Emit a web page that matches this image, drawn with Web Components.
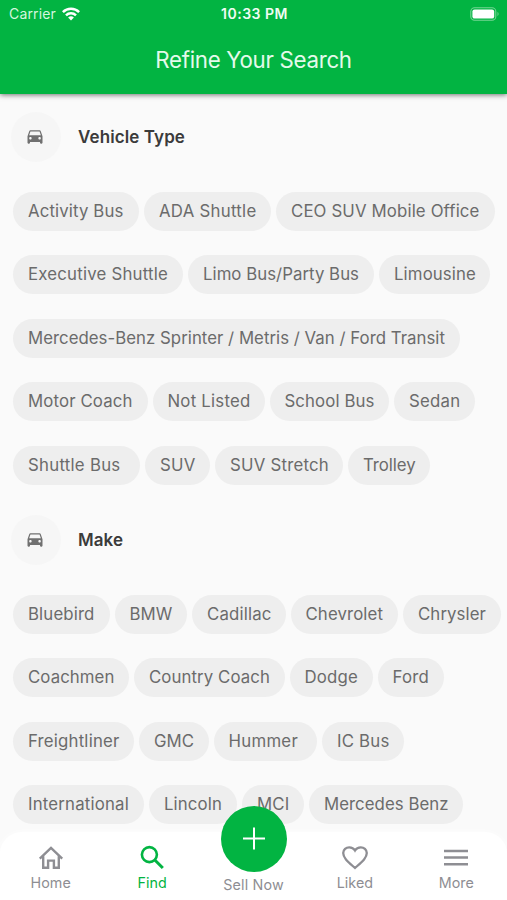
<!DOCTYPE html>
<html lang="en">
<head>
<meta charset="utf-8">
<title>Refine Your Search</title>
<style>
html, body { margin: 0; height: 100%; }
body { background: #fafafa; font-family: Inter, "Liberation Sans", sans-serif; overflow: hidden; }
</style>
</head>
<body>
<search-screen></search-screen>
<script>
const define = (name, html, ready) => customElements.define(name, class extends HTMLElement {
  constructor() {
    super();
    this.attachShadow({ mode: "open" }).innerHTML = html;
  }
  connectedCallback() { if (ready) ready(this, this.shadowRoot); }
});

/* Text tracked so that its line is exactly as wide as its "w" attribute. */
define("fit-text", `<style>
:host { display: block; white-space: nowrap; width: max-content; }
span { display: inline-block; }
</style><span><slot></slot></span>`, (el, root) => {
  const w = +el.getAttribute("w");
  const span = root.querySelector("span");
  span.style.letterSpacing = "0";
  const gap = (w - span.getBoundingClientRect().width) / el.textContent.length;
  span.style.letterSpacing = gap.toFixed(3) + "px";
});

define("status-bar", `<style>
:host { display: grid; grid-template-columns: 1fr auto 1fr; align-items: center; height: 27px; padding: 0 7px 0 9px; color: #fff; font-size: 14px; line-height: 27px; }
.left { display: flex; align-items: center; gap: 6px; color: #d5f6df; }
.time { font-weight: 600; font-size: 14px; color: #effcf3; }
.right { display: flex; justify-content: flex-end; }
svg { display: block; }
</style>
<div class="left"><fit-text w="47">Carrier</fit-text>
<svg width="18" height="14" viewBox="0 0 18 14" fill="none" stroke="#fff" stroke-width="2.5"><path d="M.9 5.1a11.5 11.5 0 0 1 16.2 0M4 8.4a7.1 7.1 0 0 1 10 0"/><path d="M9 13.5 6.1 10.6a4.1 4.1 0 0 1 5.8 0Z" fill="#fff" stroke="none"/></svg></div>
<fit-text class="time" w="67">10:33 PM</fit-text>
<div class="right"><svg width="30" height="14" viewBox="0 0 30 14"><rect x=".8" y=".8" width="25" height="12.4" rx="3.8" fill="none" stroke="#75d594" stroke-width="1.1"/><rect x="2.4" y="2.4" width="21.8" height="9.2" rx="2.2" fill="#fff"/><path d="M27.5 4.8q2.2 2.2 0 4.4Z" fill="#75d594"/></svg></div>`);

define("app-header", `<style>
:host { display: block; position: relative; z-index: 1; height: 94px; background: #02b442; box-shadow: 0 1px 5px rgba(0,0,0,.55); }
.title { display: flex; justify-content: center; height: 65px; align-items: center; font-size: 22.3px; color: #e4faeb; }
</style><status-bar></status-bar><div class="title"><fit-text w="196.5">Refine Your Search</fit-text></div>`);

define("section-title", `<style>
:host { display: flex; align-items: center; gap: 17.5px; height: 50px; padding-left: 10.5px; font-size: 17px; line-height: 20px; font-weight: 600; color: #3b3b3b; }
.disc { width: 50px; height: 50px; border-radius: 50%; background: #f6f6f6; display: grid; place-items: center; }
svg { display: block; margin-right: 1px; }
</style><div class="disc"><svg width="20" height="20" viewBox="0 0 24 24" fill="#707070"><path d="M18.92 5.01C18.72 4.42 18.16 4 17.5 4h-11c-.66 0-1.21.42-1.42 1.01L3 11v8c0 .55.45 1 1 1h1c.55 0 1-.45 1-1v-1h12v1c0 .55.45 1 1 1h1c.55 0 1-.45 1-1v-8l-2.08-5.99zM6.5 15c-.83 0-1.5-.67-1.5-1.5S5.67 12 6.5 12s1.5.67 1.5 1.5S7.33 15 6.5 15zm11 0c-.83 0-1.5-.67-1.5-1.5s.67-1.5 1.5-1.5 1.5.67 1.5 1.5-.67 1.5-1.5 1.5zM5 10l1.5-4.5h11L19 10H5z"/></svg></div><slot></slot>`);

define("chip-row", `<style>
:host { display: flex; gap: 5px; height: 39px; padding-left: 13px; }
</style><slot></slot>`);

define("filter-chip", `<style>
:host { display: block; box-sizing: border-box; flex: none; height: 39px; padding-left: 15px; border-radius: 19.5px; background: #eee; color: #6b6b6b; font-size: 16.8px; line-height: 39px; }
</style><slot></slot>`, el => { el.style.width = el.getAttribute("w") + "px"; });

define("nav-item", `<style>
:host { display: flex; flex: 1; flex-direction: column; align-items: center; color: #8e8e93; font-size: 14.3px; line-height: 18px; }
:host([active]) { color: #02b442; }
.icon { height: 28px; display: flex; align-items: center; margin-bottom: 2px; }
</style><div class="icon"><slot name="icon"></slot></div><slot></slot>`);

define("tab-bar", `<style>
:host { display: flex; position: absolute; left: 0; right: 0; bottom: 0; height: 56px; padding-top: 12px; background: #fff; border-radius: 22px 22px 0 0; z-index: 2; box-shadow: 0 0 6px rgba(255,255,255,.8); }
svg { display: block; }
.fab { position: absolute; left: 221px; top: -26px; width: 66px; height: 66px; border-radius: 50%; background: #02b442; display: grid; place-items: center; }
.sell { padding-top: 2px; }
</style>
<nav-item><svg slot="icon" width="28" height="28" viewBox="0 0 28 28" fill="none" stroke="currentColor" stroke-width="2.4"><path d="M2.800 14.600 14 3.800 25.200 14.600M6.200 12.200v11.600h4.900v-7.200h5.800v7.200H21.800V12.200"/></svg><fit-text w="40.5">Home</fit-text></nav-item>
<nav-item active><svg slot="icon" width="28" height="28" viewBox="0 0 28 28" fill="none" stroke="currentColor" stroke-width="2.6"><circle cx="11.4" cy="10.6" r="7.5"/><path d="m16.800 16 8 8" stroke-width="3"/></svg><fit-text w="29">Find</fit-text></nav-item>
<nav-item class="sell"><fit-text w="60.5">Sell Now</fit-text></nav-item>
<nav-item><svg slot="icon" width="28" height="28" viewBox="0 0 28 28" fill="none" stroke="currentColor" stroke-width="2.3"><path d="M14 24C7.2 17.900 2.200 14 2.200 9.100A6 6 0 0 1 8.300 3.300C10.700 3.300 12.800 4.500 14 6.500 15.200 4.500 17.300 3.300 19.700 3.300A6 6 0 0 1 25.800 9.100C25.800 14 20.800 17.900 14 24Z"/></svg><fit-text w="36.5">Liked</fit-text></nav-item>
<nav-item><svg slot="icon" width="28" height="28" viewBox="0 0 28 28" fill="none" stroke="currentColor" stroke-width="2.5"><path d="M2 7h24M2 13.600h24M2 20.200h24"/></svg><fit-text w="35">More</fit-text></nav-item>
<div class="fab"><svg width="24" height="24" viewBox="0 0 24 24" fill="none" stroke="#fff" stroke-width="2"><path d="M12 .5v22M1 11.500h22"/></svg></div>`);

/* Each chip: label, chip width, label width. */
const TYPES = [
  [["Activity Bus",126,95.5],["ADA Shuttle",127,97.5],["CEO SUV Mobile Office",219,188.5]],
  [["Executive Shuttle",170,140],["Limo Bus/Party Bus",186,156],["Limousine",111,82]],
  [["Mercedes-Benz Sprinter / Metris / Van / Ford Transit",447,417]],
  [["Motor Coach",134.5,104.5],["Not Listed",112,83],["School Bus",119.5,90],["Sedan",81,51.5]],
  [["Shuttle Bus",127,92.5],["SUV",65,35.5],["SUV Stretch",128,99],["Trolley",82,52.5]]
];
const MAKES = [
  [["Bluebird",96.5,66.5],["BMW",72.5,43],["Cadillac",93.5,64.5],["Chevrolet",107.5,77.5],["Chrysler",98,68]],
  [["Coachmen",116,86.5],["Country Coach",150.5,121],["Dodge",83,53.5],["Ford",66,36.5]],
  [["Freightliner",121,91.5],["GMC",69.5,40],["Hummer",103.5,69.5],["IC Bus",82,52.5]],
  [["International",131,101],["Lincoln",88,58],["MCI",62,32.5],["Mercedes Benz",154,124.5]]
];
const rows = list => list.map(r => "<chip-row>" + r.map(([t, w, tw]) =>
  `<filter-chip w="${w}"><fit-text w="${tw}">${t}</fit-text></filter-chip>`).join("") + "</chip-row>").join("");

define("search-screen", `<style>
:host { display: block; position: relative; width: 507px; height: 900px; overflow: hidden; background: #fafafa; }
.list { display: flex; flex-direction: column; gap: 24.45px; padding-top: 30px; }
section-title { margin-top: 17.8px; }
section-title.make { margin-top: 30.2px; }
</style>
<app-header></app-header>
<section-title><fit-text w="107">Vehicle Type</fit-text></section-title>
<div class="list">${rows(TYPES)}</div>
<section-title class="make"><fit-text w="45">Make</fit-text></section-title>
<div class="list">${rows(MAKES)}</div>
<tab-bar></tab-bar>`);
</script>
</body>
</html>
